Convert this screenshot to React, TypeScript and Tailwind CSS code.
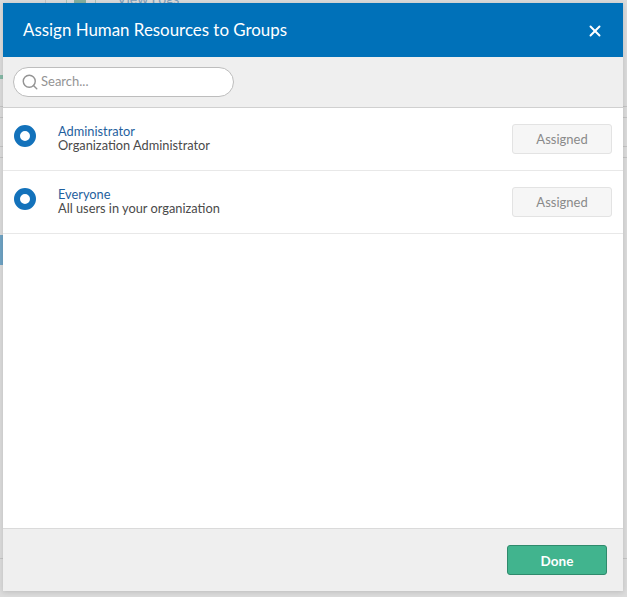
import { Search, X } from 'lucide-react';

const groups = [
  { name: 'Administrator', description: 'Organization Administrator' },
  { name: 'Everyone', description: 'All users in your organization' },
];

// bits of the dimmed page that peek out around the dialog
const pageLines = [
  { top: 'top-[106px]' },
  { top: 'top-[117px]' },
  { top: 'top-[146px]' },
  { top: 'top-[157px]' },
  { top: 'top-[558px]' },
];

export default function App() {
  return (
    <div className="relative h-[597px] w-[627px] overflow-hidden bg-[#dbdbdb] pt-[3px] pl-[3px] font-['Lato',sans-serif]">
      {pageLines.map(line => (
        <div key={line.top} className={`absolute left-0 h-px w-full bg-[#c4c4c4] ${line.top}`} />
      ))}
      <div className="absolute left-0 top-[75px] h-1 w-[3px] bg-[#86b9a6]" />
      <div className="absolute left-0 top-[235px] h-[30px] w-[3px] bg-[#6fa3c4]" />
      <div className="absolute left-[45px] top-0 h-[3px] w-px bg-[#c4c4c4]" />
      <div className="absolute left-[66px] top-0 h-[3px] w-px bg-[#a9c4b8]" />
      <div className="absolute left-[74px] top-0 h-[3px] w-3 bg-[#86b09f]" />
      <div className="absolute left-[95px] top-0 h-[3px] w-px bg-[#a9c4b8]" />
      <span className="absolute left-[117px] top-[-12px] text-[14px] text-[#7f9fba]">View Logs</span>

      <div className="relative flex h-[588px] w-[620px] flex-col bg-white shadow-[0_1px_5px_rgba(0,0,0,0.14)]">
        <div className="flex h-[54px] items-center justify-between bg-[#0071b9] pl-5 pr-[19px]">
          <h1 className="text-[16.9px] text-white">Assign Human Resources to Groups</h1>
          <X size={18} strokeWidth={2.6} className="mt-0.5 text-white" />
        </div>
        <div className="flex h-[51px] items-center border-b border-[#d0d0d0] bg-[#efefef] pl-2.5">
          <div className="flex h-[30px] w-[221px] items-center gap-0.5 rounded-full border border-[#bdbdbd] bg-white pl-[7px]">
            <Search size={18} strokeWidth={1.9} className="text-[#949494]" />
            <span className="text-[13px] text-[#949494]">Search...</span>
          </div>
        </div>
        <div className="flex-1">
          {groups.map(group => (
            <div key={group.name} className="flex h-[63px] items-center border-b border-[#e8e8e8] pr-[11px] pl-[11px]">
              <div className="mb-1.5 h-[22px] w-[22px] rounded-full border-[6px] border-[#1372bb] bg-white" />
              <div className="ml-[22px] flex-1 pb-0.5 text-[12.8px] leading-[14px]">
                <p className="text-[#1f5f9e]">{group.name}</p>
                <p className="text-[#4a4a4a]">{group.description}</p>
              </div>
              <button className="h-[30px] w-[100px] rounded-[3px] border border-[#e3e3e3] bg-[#f6f6f6] pt-0.5 text-[13px] text-[#8a8a8a]">
                Assigned
              </button>
            </div>
          ))}
        </div>
        <div className="flex h-[63px] items-center justify-end border-t border-[#dadada] bg-[#efefef] pr-4">
          <button className="h-[30px] w-[100px] rounded-[3px] border border-[#2f8a6c] bg-[#41b48e] pt-0.5 text-[13.5px] font-bold text-white">
            Done
          </button>
        </div>
      </div>
    </div>
  );
}
